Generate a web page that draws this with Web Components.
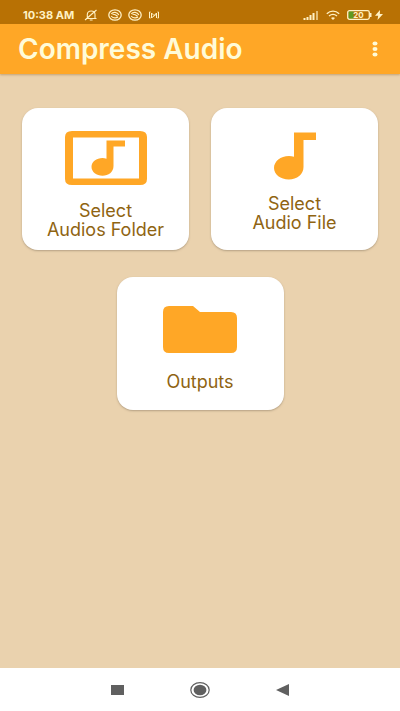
<!DOCTYPE html>
<html lang="en">
<head>
<meta charset="utf-8">
<meta name="viewport" content="width=device-width, initial-scale=1">
<title>Compress Audio</title>
<style>
  :root { --amber: #ffa726; --amber-dark: #b87104; --cream: #fff1c4; --label: #8f6412; }
  body { margin: 0; font-family: Inter, sans-serif; background: #ead2ae; }
</style>
</head>
<body>
<compress-app></compress-app>
<script>
const define = (name, html) => customElements.define(name, class extends HTMLElement {
  constructor() {
    super();
    const t = document.createElement('template');
    t.innerHTML = html;
    this.attachShadow({ mode: 'open' }).append(t.content.cloneNode(true));
  }
});

define('status-bar', `
<style>
  :host { display: flex; align-items: center; box-sizing: border-box; height: 24px; padding: 6px 17px 0 23px;
    background: var(--amber-dark); color: var(--cream); font: 700 11px/16px Inter, sans-serif; }
  svg { display: block; flex: none; fill: none; stroke: currentColor; }
  .left, .right { display: flex; align-items: center; }
  .left { flex: 1; }
  .bell { margin: 0 10px; }
  .disc { margin-right: 6px; }
  .right { gap: 7px; }
  .charge { display: flex; align-items: center; gap: 2px; }
</style>
<div class="left">
  <span>10:38 AM</span>
  <svg class="bell" width="14" height="12" viewBox="0 0 14 12" stroke-width="1.1"><path d="M2 9.500h10.500M3.300 9V5.500C3.300 3 5 2 7.200 2s3.800 1 3.800 3.500V9M5.800 11h2.800M1 11 12.500 1"/></svg>
  <svg class="disc" width="14" height="12" viewBox="0 0 14 12"><ellipse cx="7" cy="6" rx="6.200" ry="5.200" stroke-width="1.300"/><path d="M3.200 5C5 2.500 9.500 2.800 10.800 6M3.200 7C5 9.500 8.500 9.300 10 8M4.500 5.300Q7 5 9.500 7.300" stroke-width="1.200"/></svg>
  <svg class="disc" width="14" height="12" viewBox="0 0 14 12"><ellipse cx="7" cy="6" rx="6.200" ry="5.200" stroke-width="1.300"/><path d="M3.200 5C5 2.500 9.500 2.800 10.800 6M3.200 7C5 9.500 8.500 9.300 10 8M4.500 5.300Q7 5 9.500 7.300" stroke-width="1.200"/></svg>
  <svg width="12" height="10" viewBox="0 0 12 10" stroke-width="1"><path d="M2.500 2H1.500v6h1M9.500 2h1v6h-1M3.500 8V3L6 5.500 8.500 3v5M4 7.500l4-3"/></svg>
</div>
<div class="right">
  <svg width="16" height="10" viewBox="0 0 16 10" stroke-width="2"><path d="M1.500 10V8M4.500 10V7M7.500 10V5M10.500 10V3"/><path d="M14 10V1" opacity=".6"/></svg>
  <svg width="14" height="10" viewBox="0 0 14 10" stroke-width="1.400"><path d="M.8 3.700C4.500.2 9.500.2 13.200 3.700M3 6c2.500-2 5.500-2 8 0"/><path d="M5 8c1.300-1 2.700-1 4 0L7 10z" fill="currentColor" stroke="none"/></svg>
  <div class="charge">
    <svg width="26" height="10" viewBox="0 0 26 10" role="img"><rect x="1.500" y="1.200" width="5" height="7.600" fill="#5f9a20" stroke="none"/><rect x=".7" y=".7" width="21.600" height="8.600" rx="1.800" stroke-width="1.300"/><path d="M23.700 3v4" stroke-width="1.600"/><text x="11.500" y="8" text-anchor="middle" font-size="8" fill="currentColor" stroke="none">20</text></svg>
    <svg width="8" height="10" viewBox="0 0 8 10"><path d="M5 0 0 5.800h3.200L2.500 10 8 4H4.800z" fill="currentColor" stroke="none"/></svg>
  </div>
</div>`);

define('app-bar', `
<style>
  :host { display: flex; align-items: center; justify-content: space-between; box-sizing: border-box; height: 50px;
    padding: 0 13px 0 18px; background: var(--amber); color: #fffbd8; box-shadow: 0 1px 2px #a8824f99; }
  h1 { margin: 0; font: 600 28px/32px Inter, sans-serif; }
  button { display: grid; place-items: center; width: 24px; height: 32px; padding: 0; border: 0; background: none; color: inherit; }
</style>
<h1><slot></slot></h1>
<button type="button" aria-label="More options"><svg width="6" height="16" viewBox="0 0 6 16" fill="currentColor"><ellipse cx="3" cy="2.500" rx="2.500" ry="2"/><ellipse cx="3" cy="8" rx="2.500" ry="2"/><ellipse cx="3" cy="13.500" rx="2.500" ry="2"/></svg></button>`);

define('action-card', `
<style>
  :host { display: block; }
  button { display: flex; flex-direction: column; align-items: center; box-sizing: border-box; width: 100%; height: 100%;
    padding: 23px 8px 11px; border: 0; border-radius: 16px; background: #fff; box-shadow: 0 1px 2px #80705a80;
    color: var(--label); font: 400 18px/19px Inter, sans-serif; text-align: center; }
  ::slotted(svg) { display: block; fill: var(--amber); }
</style>
<button type="button"><slot name="icon"></slot><slot></slot></button>`);

define('nav-bar', `
<style>
  :host { display: flex; justify-content: center; align-items: center; gap: 50px; box-sizing: border-box; height: 43px; background: #fff; }
  button { display: grid; place-items: center; width: 32px; height: 32px; padding: 0; border: 0; background: none; }
  svg { display: block; fill: #606060; }
</style>
<button type="button" aria-label="Recent apps"><svg width="14" height="10"><rect width="13" height="10"/></svg></button>
<button type="button" aria-label="Home"><svg width="20" height="16" viewBox="0 0 20 16"><ellipse cx="10" cy="8" rx="9.200" ry="7.300" fill="none" stroke="#606060" stroke-width="1.200"/><ellipse cx="10" cy="8" rx="6.400" ry="5.200"/></svg></button>
<button type="button" aria-label="Back"><svg width="13" height="12"><path d="M0 6 13 0v12z"/></svg></button>`);

define('compress-app', `
<style>
  :host { display: flex; flex-direction: column; min-height: 100vh; }
  main { flex: 1; display: flex; flex-wrap: wrap; justify-content: center; align-content: flex-start;
    gap: 27px 22px; padding: 34px 22px; }
  action-card { flex: 0 0 calc(50% - 11px); }
  .outputs { min-height: 133px; display: grid; }
</style>
<status-bar></status-bar>
<app-bar>Compress Audio</app-bar>
<main>
  <action-card>
    <svg slot="icon" width="82" height="70" viewBox="0 0 82 70"><path fill-rule="evenodd" d="M7 0h68q7 0 7 6v42q0 6-7 6H7q-7 0-7-6V6Q0 0 7 0zM8 6.500v41h66v-41z"/><path d="M41.500 9.500H60v6H48.500V35c0 6-5 9.800-11 9.800S26.500 41 26.500 35.800 31.500 27 37.500 27q2 0 4 .7z"/></svg>
    <span>Select<br>Audios Folder</span>
  </action-card>
  <action-card>
    <svg slot="icon" width="42" height="63" viewBox="0 0 42 63"><path d="M20 1.500h22V9H29.500v27c0 7.500-6.500 12.500-14.700 12.500S0 43.500 0 37s6.500-12 15-12q2.600 0 5 .7z"/></svg>
    <span>Select<br>Audio File</span>
  </action-card>
  <action-card class="outputs">
    <svg slot="icon" width="74" height="72" viewBox="0 0 74 72"><path d="M6 6h24l7 6h31q6 0 6 6v29q0 6-6 6H6q-6 0-6-6V12q0-6 6-6z"/></svg>
    <span>Outputs</span>
  </action-card>
</main>
<nav-bar></nav-bar>`);
</script>
</body>
</html>
